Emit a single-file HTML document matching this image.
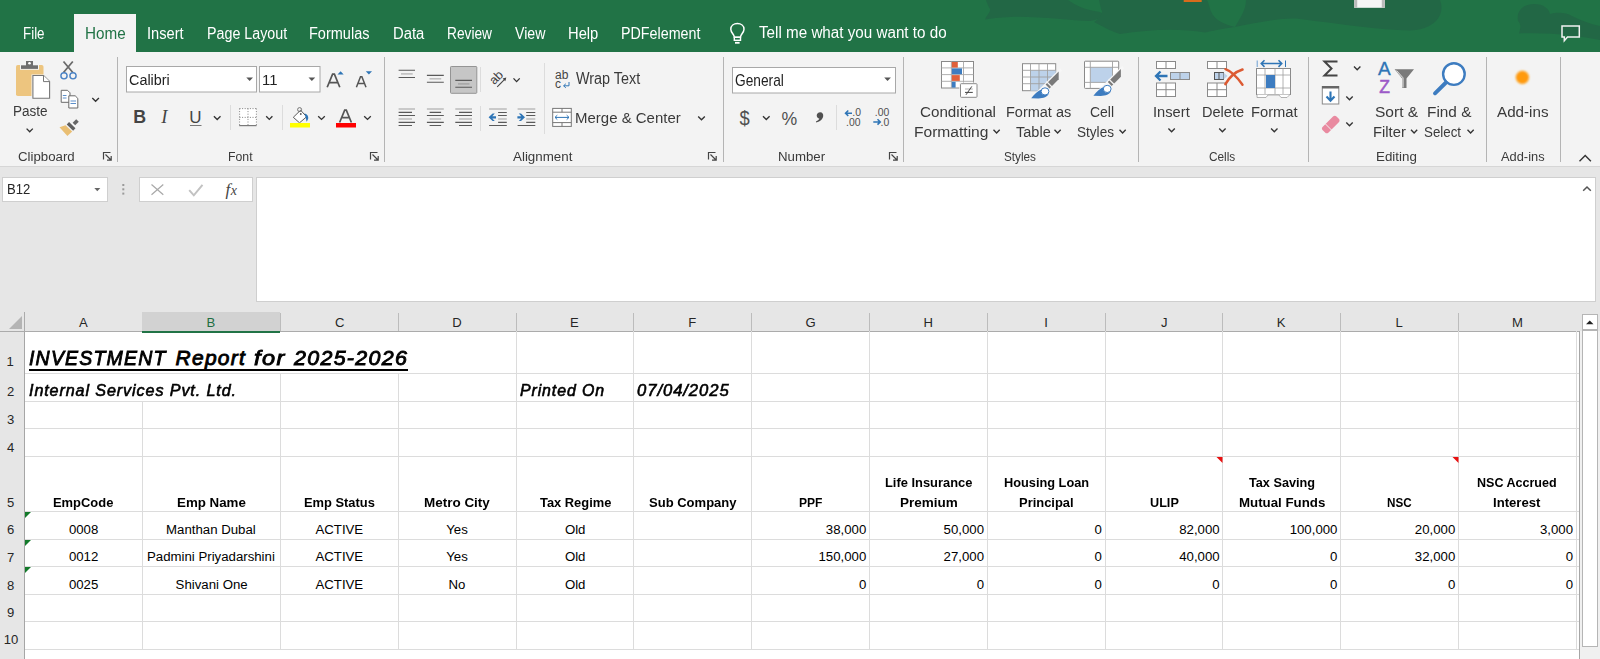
<!DOCTYPE html>
<html><head><meta charset="utf-8">
<style>
html,body{margin:0;padding:0;}
body{width:1600px;height:659px;position:relative;overflow:hidden;background:#fff;font-family:"Liberation Sans",sans-serif;}
.t{position:absolute;white-space:nowrap;line-height:1;transform-origin:0 0;}
svg{position:absolute;overflow:visible;}
</style></head><body>
<!-- tab bar -->
<div style="position:absolute;left:0;top:0;width:1600px;height:52px;background:#217346;overflow:hidden">
<svg width="1600" height="52" style="left:0;top:0">
<path d="M986 0 H1068 C1075 5 1085 10 1100 12 C1106 15 1100 20 1090 21 C1070 21 1040 16 1010 17 C1000 17.5 990 18.5 985 19.5 C987 15 991 11 990 9 C988 6 987 3 986 0 Z" fill="#226745"/>
<path d="M1099 0 H1207 C1212 10 1208 20 1235 27 C1220 29 1212 31 1205 32.5 C1180 28 1150 29 1120 34 C1110 31 1100 25 1094 22 C1100 18 1104 13 1101 9 Z" fill="#226745"/>
<path d="M1246 0 H1440 C1442 5 1442 10 1440 15 C1436 24 1425 30 1410 30.5 C1380 30 1340 24 1300 19 C1285 17 1260 22 1235 27 C1240 18 1246 10 1246 0 Z" fill="#226745"/>
<path d="M1518 21 C1516 10 1524 4 1534 4 C1544 4 1549 9 1550 14 C1556 12 1566 12 1572 16 C1580 20 1590 24 1600 26 V40 C1580 36 1550 32 1519 33.5 C1520 29 1522 25 1518 21 Z" fill="#226745"/>
<rect x="1183.7" y="0" width="18" height="2" fill="#d86b1c"/>
<rect x="1354.2" y="0" width="30.6" height="7.8" fill="#f6f6f6"/><rect x="1354.2" y="0" width="3" height="7.8" fill="#bbb"/><rect x="1381.8" y="0" width="3" height="7.8" fill="#bbb"/>
<path d="M1562 26 H1579.3 V37 H1567.5 L1564.3 40.8 V37 H1562 Z" fill="none" stroke="#f2f2f2" stroke-width="1.5"/>
</svg>
</div>
<div style="position:absolute;left:74px;top:14px;width:62px;height:40px;background:#f3f3f3"></div>
<!-- ribbon -->
<div style="position:absolute;left:0;top:52px;width:1600px;height:114px;background:#f3f3f3;border-bottom:1px solid #d6d6d6"></div>
<!-- formula area -->
<div style="position:absolute;left:0;top:167px;width:1600px;height:145px;background:#e6e6e6"></div>
<div style="position:absolute;left:2px;top:177px;width:104px;height:23px;background:#fff;border:1px solid #cfcfcf"></div>
<div style="position:absolute;left:139px;top:177px;width:112px;height:23px;background:#fff;border:1px solid #cfcfcf"></div>
<div style="position:absolute;left:256px;top:177px;width:1338px;height:123px;background:#fff;border:1px solid #cfcfcf"></div>
<!-- column headers -->
<div style="position:absolute;left:0;top:312px;width:1600px;height:19px;background:#e6e6e6"></div><div style="position:absolute;left:0;top:331px;width:1579px;height:1px;background:#ababab"></div>
<div style="position:absolute;left:142px;top:312px;width:138px;height:19px;background:#d2d2d2;border-bottom:2px solid #217346"></div>
<!-- row headers -->
<div style="position:absolute;left:0;top:332px;width:24px;height:327px;background:#e6e6e6;border-right:1px solid #a6a6a6"></div>
<!-- scrollbar -->
<div style="position:absolute;left:1579px;top:331px;width:1px;height:328px;background:#a6a6a6"></div>
<div style="position:absolute;left:1580px;top:331px;width:20px;height:328px;background:#f0f0f0"></div>
<div style="position:absolute;left:1582px;top:314px;width:14px;height:14px;background:#fff;border:1px solid #b5b5b5"></div>
<div style="position:absolute;left:1582px;top:330px;width:14px;height:315px;background:#fff;border:1px solid #b5b5b5"></div>
<div style="position:absolute;left:142px;top:401px;width:1px;height:27px;background:#dcdcdc"></div><div style="position:absolute;left:142px;top:428px;width:1px;height:28px;background:#dcdcdc"></div><div style="position:absolute;left:142px;top:456px;width:1px;height:55px;background:#dcdcdc"></div><div style="position:absolute;left:142px;top:511px;width:1px;height:28px;background:#dcdcdc"></div><div style="position:absolute;left:142px;top:539px;width:1px;height:27px;background:#dcdcdc"></div><div style="position:absolute;left:142px;top:566px;width:1px;height:28px;background:#dcdcdc"></div><div style="position:absolute;left:142px;top:594px;width:1px;height:27px;background:#dcdcdc"></div><div style="position:absolute;left:142px;top:621px;width:1px;height:28px;background:#dcdcdc"></div><div style="position:absolute;left:280px;top:373px;width:1px;height:28px;background:#dcdcdc"></div><div style="position:absolute;left:280px;top:401px;width:1px;height:27px;background:#dcdcdc"></div><div style="position:absolute;left:280px;top:428px;width:1px;height:28px;background:#dcdcdc"></div><div style="position:absolute;left:280px;top:456px;width:1px;height:55px;background:#dcdcdc"></div><div style="position:absolute;left:280px;top:511px;width:1px;height:28px;background:#dcdcdc"></div><div style="position:absolute;left:280px;top:539px;width:1px;height:27px;background:#dcdcdc"></div><div style="position:absolute;left:280px;top:566px;width:1px;height:28px;background:#dcdcdc"></div><div style="position:absolute;left:280px;top:594px;width:1px;height:27px;background:#dcdcdc"></div><div style="position:absolute;left:280px;top:621px;width:1px;height:28px;background:#dcdcdc"></div><div style="position:absolute;left:398px;top:373px;width:1px;height:28px;background:#dcdcdc"></div><div style="position:absolute;left:398px;top:401px;width:1px;height:27px;background:#dcdcdc"></div><div style="position:absolute;left:398px;top:428px;width:1px;height:28px;background:#dcdcdc"></div><div style="position:absolute;left:398px;top:456px;width:1px;height:55px;background:#dcdcdc"></div><div style="position:absolute;left:398px;top:511px;width:1px;height:28px;background:#dcdcdc"></div><div style="position:absolute;left:398px;top:539px;width:1px;height:27px;background:#dcdcdc"></div><div style="position:absolute;left:398px;top:566px;width:1px;height:28px;background:#dcdcdc"></div><div style="position:absolute;left:398px;top:594px;width:1px;height:27px;background:#dcdcdc"></div><div style="position:absolute;left:398px;top:621px;width:1px;height:28px;background:#dcdcdc"></div><div style="position:absolute;left:516px;top:331px;width:1px;height:42px;background:#dcdcdc"></div><div style="position:absolute;left:516px;top:373px;width:1px;height:28px;background:#dcdcdc"></div><div style="position:absolute;left:516px;top:401px;width:1px;height:27px;background:#dcdcdc"></div><div style="position:absolute;left:516px;top:428px;width:1px;height:28px;background:#dcdcdc"></div><div style="position:absolute;left:516px;top:456px;width:1px;height:55px;background:#dcdcdc"></div><div style="position:absolute;left:516px;top:511px;width:1px;height:28px;background:#dcdcdc"></div><div style="position:absolute;left:516px;top:539px;width:1px;height:27px;background:#dcdcdc"></div><div style="position:absolute;left:516px;top:566px;width:1px;height:28px;background:#dcdcdc"></div><div style="position:absolute;left:516px;top:594px;width:1px;height:27px;background:#dcdcdc"></div><div style="position:absolute;left:516px;top:621px;width:1px;height:28px;background:#dcdcdc"></div><div style="position:absolute;left:633px;top:331px;width:1px;height:42px;background:#dcdcdc"></div><div style="position:absolute;left:633px;top:373px;width:1px;height:28px;background:#dcdcdc"></div><div style="position:absolute;left:633px;top:401px;width:1px;height:27px;background:#dcdcdc"></div><div style="position:absolute;left:633px;top:428px;width:1px;height:28px;background:#dcdcdc"></div><div style="position:absolute;left:633px;top:456px;width:1px;height:55px;background:#dcdcdc"></div><div style="position:absolute;left:633px;top:511px;width:1px;height:28px;background:#dcdcdc"></div><div style="position:absolute;left:633px;top:539px;width:1px;height:27px;background:#dcdcdc"></div><div style="position:absolute;left:633px;top:566px;width:1px;height:28px;background:#dcdcdc"></div><div style="position:absolute;left:633px;top:594px;width:1px;height:27px;background:#dcdcdc"></div><div style="position:absolute;left:633px;top:621px;width:1px;height:28px;background:#dcdcdc"></div><div style="position:absolute;left:751px;top:331px;width:1px;height:42px;background:#dcdcdc"></div><div style="position:absolute;left:751px;top:373px;width:1px;height:28px;background:#dcdcdc"></div><div style="position:absolute;left:751px;top:401px;width:1px;height:27px;background:#dcdcdc"></div><div style="position:absolute;left:751px;top:428px;width:1px;height:28px;background:#dcdcdc"></div><div style="position:absolute;left:751px;top:456px;width:1px;height:55px;background:#dcdcdc"></div><div style="position:absolute;left:751px;top:511px;width:1px;height:28px;background:#dcdcdc"></div><div style="position:absolute;left:751px;top:539px;width:1px;height:27px;background:#dcdcdc"></div><div style="position:absolute;left:751px;top:566px;width:1px;height:28px;background:#dcdcdc"></div><div style="position:absolute;left:751px;top:594px;width:1px;height:27px;background:#dcdcdc"></div><div style="position:absolute;left:751px;top:621px;width:1px;height:28px;background:#dcdcdc"></div><div style="position:absolute;left:869px;top:331px;width:1px;height:42px;background:#dcdcdc"></div><div style="position:absolute;left:869px;top:373px;width:1px;height:28px;background:#dcdcdc"></div><div style="position:absolute;left:869px;top:401px;width:1px;height:27px;background:#dcdcdc"></div><div style="position:absolute;left:869px;top:428px;width:1px;height:28px;background:#dcdcdc"></div><div style="position:absolute;left:869px;top:456px;width:1px;height:55px;background:#dcdcdc"></div><div style="position:absolute;left:869px;top:511px;width:1px;height:28px;background:#dcdcdc"></div><div style="position:absolute;left:869px;top:539px;width:1px;height:27px;background:#dcdcdc"></div><div style="position:absolute;left:869px;top:566px;width:1px;height:28px;background:#dcdcdc"></div><div style="position:absolute;left:869px;top:594px;width:1px;height:27px;background:#dcdcdc"></div><div style="position:absolute;left:869px;top:621px;width:1px;height:28px;background:#dcdcdc"></div><div style="position:absolute;left:987px;top:331px;width:1px;height:42px;background:#dcdcdc"></div><div style="position:absolute;left:987px;top:373px;width:1px;height:28px;background:#dcdcdc"></div><div style="position:absolute;left:987px;top:401px;width:1px;height:27px;background:#dcdcdc"></div><div style="position:absolute;left:987px;top:428px;width:1px;height:28px;background:#dcdcdc"></div><div style="position:absolute;left:987px;top:456px;width:1px;height:55px;background:#dcdcdc"></div><div style="position:absolute;left:987px;top:511px;width:1px;height:28px;background:#dcdcdc"></div><div style="position:absolute;left:987px;top:539px;width:1px;height:27px;background:#dcdcdc"></div><div style="position:absolute;left:987px;top:566px;width:1px;height:28px;background:#dcdcdc"></div><div style="position:absolute;left:987px;top:594px;width:1px;height:27px;background:#dcdcdc"></div><div style="position:absolute;left:987px;top:621px;width:1px;height:28px;background:#dcdcdc"></div><div style="position:absolute;left:1105px;top:331px;width:1px;height:42px;background:#dcdcdc"></div><div style="position:absolute;left:1105px;top:373px;width:1px;height:28px;background:#dcdcdc"></div><div style="position:absolute;left:1105px;top:401px;width:1px;height:27px;background:#dcdcdc"></div><div style="position:absolute;left:1105px;top:428px;width:1px;height:28px;background:#dcdcdc"></div><div style="position:absolute;left:1105px;top:456px;width:1px;height:55px;background:#dcdcdc"></div><div style="position:absolute;left:1105px;top:511px;width:1px;height:28px;background:#dcdcdc"></div><div style="position:absolute;left:1105px;top:539px;width:1px;height:27px;background:#dcdcdc"></div><div style="position:absolute;left:1105px;top:566px;width:1px;height:28px;background:#dcdcdc"></div><div style="position:absolute;left:1105px;top:594px;width:1px;height:27px;background:#dcdcdc"></div><div style="position:absolute;left:1105px;top:621px;width:1px;height:28px;background:#dcdcdc"></div><div style="position:absolute;left:1222px;top:331px;width:1px;height:42px;background:#dcdcdc"></div><div style="position:absolute;left:1222px;top:373px;width:1px;height:28px;background:#dcdcdc"></div><div style="position:absolute;left:1222px;top:401px;width:1px;height:27px;background:#dcdcdc"></div><div style="position:absolute;left:1222px;top:428px;width:1px;height:28px;background:#dcdcdc"></div><div style="position:absolute;left:1222px;top:456px;width:1px;height:55px;background:#dcdcdc"></div><div style="position:absolute;left:1222px;top:511px;width:1px;height:28px;background:#dcdcdc"></div><div style="position:absolute;left:1222px;top:539px;width:1px;height:27px;background:#dcdcdc"></div><div style="position:absolute;left:1222px;top:566px;width:1px;height:28px;background:#dcdcdc"></div><div style="position:absolute;left:1222px;top:594px;width:1px;height:27px;background:#dcdcdc"></div><div style="position:absolute;left:1222px;top:621px;width:1px;height:28px;background:#dcdcdc"></div><div style="position:absolute;left:1340px;top:331px;width:1px;height:42px;background:#dcdcdc"></div><div style="position:absolute;left:1340px;top:373px;width:1px;height:28px;background:#dcdcdc"></div><div style="position:absolute;left:1340px;top:401px;width:1px;height:27px;background:#dcdcdc"></div><div style="position:absolute;left:1340px;top:428px;width:1px;height:28px;background:#dcdcdc"></div><div style="position:absolute;left:1340px;top:456px;width:1px;height:55px;background:#dcdcdc"></div><div style="position:absolute;left:1340px;top:511px;width:1px;height:28px;background:#dcdcdc"></div><div style="position:absolute;left:1340px;top:539px;width:1px;height:27px;background:#dcdcdc"></div><div style="position:absolute;left:1340px;top:566px;width:1px;height:28px;background:#dcdcdc"></div><div style="position:absolute;left:1340px;top:594px;width:1px;height:27px;background:#dcdcdc"></div><div style="position:absolute;left:1340px;top:621px;width:1px;height:28px;background:#dcdcdc"></div><div style="position:absolute;left:1458px;top:331px;width:1px;height:42px;background:#dcdcdc"></div><div style="position:absolute;left:1458px;top:373px;width:1px;height:28px;background:#dcdcdc"></div><div style="position:absolute;left:1458px;top:401px;width:1px;height:27px;background:#dcdcdc"></div><div style="position:absolute;left:1458px;top:428px;width:1px;height:28px;background:#dcdcdc"></div><div style="position:absolute;left:1458px;top:456px;width:1px;height:55px;background:#dcdcdc"></div><div style="position:absolute;left:1458px;top:511px;width:1px;height:28px;background:#dcdcdc"></div><div style="position:absolute;left:1458px;top:539px;width:1px;height:27px;background:#dcdcdc"></div><div style="position:absolute;left:1458px;top:566px;width:1px;height:28px;background:#dcdcdc"></div><div style="position:absolute;left:1458px;top:594px;width:1px;height:27px;background:#dcdcdc"></div><div style="position:absolute;left:1458px;top:621px;width:1px;height:28px;background:#dcdcdc"></div><div style="position:absolute;left:1576px;top:331px;width:1px;height:42px;background:#dcdcdc"></div><div style="position:absolute;left:1576px;top:373px;width:1px;height:28px;background:#dcdcdc"></div><div style="position:absolute;left:1576px;top:401px;width:1px;height:27px;background:#dcdcdc"></div><div style="position:absolute;left:1576px;top:428px;width:1px;height:28px;background:#dcdcdc"></div><div style="position:absolute;left:1576px;top:456px;width:1px;height:55px;background:#dcdcdc"></div><div style="position:absolute;left:1576px;top:511px;width:1px;height:28px;background:#dcdcdc"></div><div style="position:absolute;left:1576px;top:539px;width:1px;height:27px;background:#dcdcdc"></div><div style="position:absolute;left:1576px;top:566px;width:1px;height:28px;background:#dcdcdc"></div><div style="position:absolute;left:1576px;top:594px;width:1px;height:27px;background:#dcdcdc"></div><div style="position:absolute;left:1576px;top:621px;width:1px;height:28px;background:#dcdcdc"></div><div style="position:absolute;left:25px;top:373px;width:1554px;height:1px;background:#dcdcdc"></div><div style="position:absolute;left:25px;top:401px;width:1554px;height:1px;background:#dcdcdc"></div><div style="position:absolute;left:25px;top:428px;width:1554px;height:1px;background:#dcdcdc"></div><div style="position:absolute;left:25px;top:456px;width:1554px;height:1px;background:#dcdcdc"></div><div style="position:absolute;left:25px;top:511px;width:1554px;height:1px;background:#dcdcdc"></div><div style="position:absolute;left:25px;top:539px;width:1554px;height:1px;background:#dcdcdc"></div><div style="position:absolute;left:25px;top:566px;width:1554px;height:1px;background:#dcdcdc"></div><div style="position:absolute;left:25px;top:594px;width:1554px;height:1px;background:#dcdcdc"></div><div style="position:absolute;left:25px;top:621px;width:1554px;height:1px;background:#dcdcdc"></div><div style="position:absolute;left:25px;top:649px;width:1554px;height:1px;background:#dcdcdc"></div>
<div style="position:absolute;left:29px;top:369px;width:379px;height:2px;background:#000"></div>
<div style="position:absolute;left:24px;top:312px;width:1px;height:20px;background:#ababab"></div>
<div style="position:absolute;left:280px;top:313px;width:1px;height:18px;background:#bcbcbc"></div><div style="position:absolute;left:398px;top:313px;width:1px;height:18px;background:#bcbcbc"></div><div style="position:absolute;left:516px;top:313px;width:1px;height:18px;background:#bcbcbc"></div><div style="position:absolute;left:633px;top:313px;width:1px;height:18px;background:#bcbcbc"></div><div style="position:absolute;left:751px;top:313px;width:1px;height:18px;background:#bcbcbc"></div><div style="position:absolute;left:869px;top:313px;width:1px;height:18px;background:#bcbcbc"></div><div style="position:absolute;left:987px;top:313px;width:1px;height:18px;background:#bcbcbc"></div><div style="position:absolute;left:1105px;top:313px;width:1px;height:18px;background:#bcbcbc"></div><div style="position:absolute;left:1222px;top:313px;width:1px;height:18px;background:#bcbcbc"></div><div style="position:absolute;left:1340px;top:313px;width:1px;height:18px;background:#bcbcbc"></div><div style="position:absolute;left:1458px;top:313px;width:1px;height:18px;background:#bcbcbc"></div>
<svg width="1600" height="660" style="left:0;top:0" viewBox="0 0 1600 660">
<defs>
<filter id="blur1" x="-50%" y="-50%" width="200%" height="200%"><feGaussianBlur stdDeviation="0.9"/></filter>
</defs>
<!-- separators -->
<g fill="#b4b4b4">
<rect x="117" y="57" width="1" height="105"/>
<rect x="384" y="57" width="1" height="105"/>
<rect x="723" y="57" width="1" height="105"/>
<rect x="903" y="57" width="1" height="105"/>
<rect x="1138" y="57" width="1" height="105"/>
<rect x="1308" y="57" width="1" height="105"/>
<rect x="1486" y="57" width="1" height="105"/>
<rect x="1560" y="57" width="1" height="105"/>
</g>
<g fill="#dcdcdc">
<rect x="230" y="105" width="1" height="25"/>
<rect x="282" y="105" width="1" height="25"/>
<rect x="480" y="67" width="1" height="25"/>
<rect x="480" y="106" width="1" height="25"/>
<rect x="544" y="63" width="1" height="71"/>
<rect x="836" y="105" width="1" height="25"/>
</g>
<!-- chevrons (small) -->
<g fill="none" stroke="#333" stroke-width="1.35">
<path d="M26.6 128.6 L29.7 131.8 L32.8 128.6"/>
<path d="M92.3 98 L95.6 101.3 L98.9 98"/>
<path d="M213.9 116.2 L217.2 119.5 L220.5 116.2"/>
<path d="M266.2 116.2 L269.3 119.4 L272.4 116.2"/>
<path d="M318.2 116.2 L321.5 119.4 L324.8 116.2"/>
<path d="M364.2 116.2 L367.5 119.4 L370.8 116.2"/>
<path d="M513.5 78.4 L516.6 81.6 L519.7 78.4"/>
<path d="M698.2 116.4 L701.5 119.7 L704.8 116.4"/>
<path d="M763 116.2 L766.3 119.5 L769.6 116.2"/>
<path d="M993.5 129.8 L996.6 133 L999.7 129.8"/>
<path d="M1054.5 129.8 L1057.6 133 L1060.7 129.8"/>
<path d="M1119.5 129.8 L1122.6 133 L1125.7 129.8"/>
<path d="M1168.4 128.6 L1171.6 131.8 L1174.8 128.6"/>
<path d="M1219.2 128.6 L1222.4 131.8 L1225.6 128.6"/>
<path d="M1271.1 128.6 L1274.3 131.8 L1277.5 128.6"/>
<path d="M1354 66.5 L1357.2 69.7 L1360.4 66.5"/>
<path d="M1346.3 96.5 L1349.5 99.7 L1352.7 96.5"/>
<path d="M1346.3 122.5 L1349.5 125.7 L1352.7 122.5"/>
<path d="M1411 129.8 L1414.1 133 L1417.2 129.8"/>
<path d="M1467.5 129.8 L1470.6 133 L1473.7 129.8"/>
<path d="M1579.5 161.3 L1585.2 155.6 L1590.9 161.3" stroke-width="1.4"/>
</g>
<!-- dialog launchers -->
<g fill="none" stroke="#444" stroke-width="1.2">
<path d="M103.5 159.5 V152.5 H110.5"/><path d="M105.5 154.5 L111 160 M107 160.2 H111.2 V156"/>
<path d="M370.5 159.5 V152.5 H377.5"/><path d="M372.5 154.5 L378 160 M374 160.2 H378.2 V156"/>
<path d="M708.5 159.5 V152.5 H715.5"/><path d="M710.5 154.5 L716 160 M712 160.2 H716.2 V156"/>
<path d="M889.5 159.5 V152.5 H896.5"/><path d="M891.5 154.5 L897 160 M893 160.2 H897.2 V156"/>
</g>

<!-- ===== Clipboard ===== -->
<rect x="16" y="65" width="27.5" height="31" rx="1.8" fill="#edc57f"/>
<rect x="20" y="64.3" width="19" height="5.5" fill="#f3f3f3"/>
<rect x="21" y="65.3" width="17" height="3.6" fill="#6e6e6e"/>
<rect x="26" y="61" width="7" height="5" fill="#6e6e6e"/>
<circle cx="29.5" cy="63.3" r="1.3" fill="#fff"/>
<path d="M31.5 74.5 H43.8 L50.5 81.2 V99 H31.5 Z" fill="#f3f3f3"/>
<path d="M32.9 75.5 H43.5 L49.6 81.6 V98.3 H32.9 Z" fill="#fff" stroke="#777" stroke-width="1.1"/>
<path d="M43.5 75.5 V81.6 H49.6" fill="#fff" stroke="#777" stroke-width="1"/>
<!-- scissors -->
<path d="M63.5 61.5 L72.8 72.5 M72.8 61.5 L63.5 72.5" stroke="#6a6a6a" stroke-width="1.8" fill="none"/>
<circle cx="64" cy="75.8" r="3.1" fill="none" stroke="#4a82c4" stroke-width="1.4"/>
<circle cx="73" cy="75.8" r="3.1" fill="none" stroke="#4a82c4" stroke-width="1.4"/>
<!-- copy -->
<path d="M61.2 90.3 H67.5 L70 92.8 V102.3 H61.2 Z" fill="#fff" stroke="#6a6a6a" stroke-width="1"/>
<path d="M68.8 95.8 H75.2 L77.8 98.4 V108 H68.8 Z" fill="#fff" stroke="#6a6a6a" stroke-width="1"/>
<path d="M62.8 95.5 H66.5 M62.8 98 H66.5 M70.5 101 H76 M70.5 103.5 H76" stroke="#4a82c4" stroke-width="0.9"/>
<!-- format painter -->
<path d="M73.9 124 L77.5 120.4" stroke="#666" stroke-width="3.6"/>
<path d="M67.9 123.2 L74.3 129.5" stroke="#5f5f5f" stroke-width="3.3"/>
<path d="M59.5 127.2 L65.5 125.2 L72.2 131.4 L67.4 135.9 Z" fill="#e9be72"/>
<!-- ===== Font ===== -->
<rect x="126.5" y="66.5" width="130" height="25.5" fill="#fff" stroke="#a8a8a8" stroke-width="1"/>
<rect x="259.5" y="66.5" width="60.5" height="25.5" fill="#fff" stroke="#a8a8a8" stroke-width="1"/>
<path d="M246.3 77.6 H253 L249.65 81 Z" fill="#555"/>
<path d="M308.5 77.6 H315.2 L311.85 81 Z" fill="#555"/>
<!-- grow/shrink A -->
<path d="M327.2 87.3 L332.6 74.2 H334.4 L339.8 87.3 M329.3 82.6 H337.7" fill="none" stroke="#555" stroke-width="1.7"/>
<path d="M337.5 74.5 L340.6 71.3 L343.7 74.5 Z" fill="#2e75b6"/>
<path d="M356.4 87.3 L360.5 76.8 H361.9 L366 87.3 M358 83.4 H364.4" fill="none" stroke="#555" stroke-width="1.5"/>
<path d="M365.8 71.3 H372 L368.9 74.5 Z" fill="#2e75b6"/>
<!-- B I U -->
<text x="133.3" y="123.4" font-family="Liberation Sans" font-weight="bold" font-size="17.8" fill="#444">B</text>
<text x="161.2" y="123.4" font-family="Liberation Serif" font-style="italic" font-size="18.5" fill="#444">I</text>
<text x="189.2" y="123.2" font-family="Liberation Sans" font-size="17" fill="#444">U</text>
<rect x="190" y="125" width="11.5" height="1" fill="#777"/>
<!-- borders icon -->
<rect x="239.5" y="108.5" width="17" height="17" fill="#fff"/>
<path d="M239.6 108.5 V125 M256.4 108.5 V125 M248 108.5 V125 M239.5 108.6 H256.5 M239.5 117.4 H256.5" stroke="#777" stroke-width="0.9" stroke-dasharray="1 1.6" fill="none"/>
<rect x="239.2" y="125" width="17.4" height="1.2" fill="#7a7a7a"/>
<!-- fill color -->
<path d="M293.3 117.3 L300.6 110.2 L306.6 116.8 L299.5 122.8 Z" fill="#fff" stroke="#5a5a5a" stroke-width="1"/>
<circle cx="299.6" cy="109.6" r="2" fill="none" stroke="#666" stroke-width="0.9"/>
<circle cx="300.8" cy="114" r="0.9" fill="#555"/>
<path d="M304.5 113.2 C307.5 114.2 308.6 116.5 308.2 118.5 C307.8 120 307 121 306.5 121.8 C306.2 119.5 306 117.5 305.2 116 Z" fill="#2e75b6"/>
<rect x="290" y="123" width="20" height="4.5" fill="#ffff00"/>
<!-- font color -->
<path d="M339.6 122.5 L344.7 110.2 H346.3 L351.4 122.5 M341.5 117.7 H349.5" fill="none" stroke="#555" stroke-width="1.7"/>
<rect x="336" y="123" width="20" height="4.5" fill="#ff0000"/>

<!-- ===== Alignment ===== -->
<rect x="450.5" y="66.5" width="26.3" height="26.8" rx="0.8" fill="#c6c6c6" stroke="#949494" stroke-width="1"/>
<g stroke="#5a5a5a" stroke-width="1.1" fill="none">
<path d="M398.6 70.3 H415 M398.6 77.5 H415"/>
<path d="M426.9 75.4 H443.8 M426.9 82.3 H443.8"/>
<path d="M455.3 80.4 H472 M455.3 87.3 H472"/>
</g>
<g stroke="#bcbcbc" stroke-width="1.5" fill="none">
<path d="M401 73.9 H412.7"/>
<path d="M429.5 78.8 H441.2"/>
</g>
<path d="M458 83.9 H469.5" stroke="#a5a5a5" stroke-width="1.5"/>
<!-- orientation -->
<text x="0" y="0" font-family="Liberation Sans" font-size="12.5" fill="#444" transform="translate(494.2 85.3) rotate(-45)">ab</text>
<path d="M497.2 86.8 L505.6 78.3" stroke="#444" stroke-width="1.1" fill="none"/><path d="M506.3 77.6 L502.6 78.6 L505.3 81.3 Z" fill="#444"/>
<!-- row2 align -->
<g stroke="#bcbcbc" stroke-width="1.5" fill="none">
<path d="M398.6 109 H415 M398.6 119 H412"/>
<path d="M426.9 109 H443.8 M429.6 119 H441.1"/>
<path d="M455.3 109 H472 M459 119 H472"/>
<path d="M489.1 109 H506.8 M498.1 119 H506.8"/>
<path d="M517.6 109 H535.3 M526.2 119 H535.3"/>
</g>
<g stroke="#5a5a5a" stroke-width="1.1" fill="none">
<path d="M398.6 112.4 H412 M398.6 115.5 H415 M398.6 122.4 H415 M398.6 125.5 H412"/>
<path d="M429.6 112.4 H441.1 M426.9 115.5 H443.8 M426.9 122.4 H443.8 M429.6 125.5 H441.1"/>
<path d="M459 112.4 H472 M455.3 115.5 H472 M455.3 122.4 H472 M459 125.5 H472"/>
<path d="M498.1 112.5 H506.8 M498.1 115.5 H506.8 M498.1 122.4 H506.8 M489.1 125.5 H506.8"/>
<path d="M526.2 112.5 H535.3 M526.2 115.5 H535.3 M526.2 122.4 H535.3 M517.6 125.5 H535.3"/>
</g>
<path d="M488.6 117.3 L492.6 113.6 H494.8 L492.3 116.2 H496 V118.4 H492.3 L494.8 121 H492.6 Z" fill="#2e75b6"/>
<path d="M525 117.3 L521 113.6 H518.8 L521.3 116.2 H517.4 V118.4 H521.3 L518.8 121 H521 Z" fill="#2e75b6"/>
<!-- wrap text icon -->
<text x="555" y="78.9" font-family="Liberation Sans" font-size="12" fill="#444">ab</text>
<text x="555" y="88" font-family="Liberation Sans" font-size="12" fill="#444">c</text>
<path d="M569 82 V85.8 H563.8 M565.8 83.8 L563.6 85.8 L565.8 87.8" stroke="#2e75b6" stroke-width="1" fill="none"/>
<!-- merge icon -->
<rect x="552.7" y="108.4" width="18.6" height="18" fill="#fff" stroke="#777" stroke-width="1"/>
<path d="M552.7 112.2 H571.3 M552.7 122.6 H571.3 M562 108.4 V112.2 M562 122.6 V126.4" stroke="#777" stroke-width="1"/>
<path d="M555 117.4 H569 M557.3 115.2 L555 117.4 L557.3 119.6 M566.7 115.2 L569 117.4 L566.7 119.6" stroke="#2e75b6" stroke-width="1" fill="none"/>

<!-- ===== Number ===== -->
<rect x="732.5" y="67.5" width="163" height="25.5" fill="#fff" stroke="#a8a8a8" stroke-width="1"/>
<path d="M884.2 77.6 H890.9 L887.55 81 Z" fill="#555"/>
<text x="739.6" y="125.3" font-family="Liberation Sans" font-size="20" fill="#505050" transform="translate(739.6 0) scale(0.92 1) translate(-739.6 0)">$</text>
<text x="781.6" y="124.8" font-family="Liberation Sans" font-size="19" fill="#505050" transform="translate(781.6 0) scale(0.93 1) translate(-781.6 0)">%</text>
<path d="M820.2 112.2 C822.4 112.2 823.4 114 823.2 116 C823 119 820.5 121.4 816.2 122.4 L815.9 121.6 C818 120.6 819.2 119.5 819.3 118.6 C817.8 118.4 816.7 117.2 816.7 115.6 C816.7 113.6 818.2 112.2 820.2 112.2 Z" fill="#505050"/>
<!-- inc/dec decimal -->
<text x="852.3" y="116.2" font-family="Liberation Sans" font-size="10.4" fill="#505050">.0</text>
<text x="846" y="125.9" font-family="Liberation Sans" font-size="10.4" fill="#505050">.00</text>
<path d="M845.5 113.2 H852 M848.3 110.5 L845.5 113.2 L848.3 115.9" stroke="#2e75b6" stroke-width="1.5" fill="none"/>
<text x="874.8" y="116.2" font-family="Liberation Sans" font-size="10.4" fill="#505050">.00</text>
<text x="880.6" y="125.9" font-family="Liberation Sans" font-size="10.4" fill="#505050">.0</text>
<path d="M873.3 121.9 H880.2 M877.5 119.2 L880.3 121.9 L877.5 124.6" stroke="#2e75b6" stroke-width="1.5" fill="none"/>

<!-- ===== Styles ===== -->
<!-- conditional formatting -->
<rect x="941.5" y="61.5" width="32" height="26.5" fill="#fff" stroke="#8a8a8a" stroke-width="1"/>
<path d="M941.5 67.9 H973.5 M941.5 74.6 H973.5 M941.5 81.3 H973.5 M951.4 61.5 V88 M963.5 61.5 V88" stroke="#a8a8a8" stroke-width="0.9"/>
<rect x="951.8" y="62" width="6" height="5.6" fill="#e0603a"/>
<rect x="951.8" y="68.4" width="10.2" height="5.8" fill="#3d7cc0"/>
<rect x="951.8" y="75.1" width="8" height="5.8" fill="#e0603a"/>
<rect x="951.8" y="81.8" width="3.8" height="5.8" fill="#3d7cc0"/>
<rect x="959.3" y="82.5" width="19" height="16" fill="#f3f3f3"/>
<rect x="960.5" y="83.7" width="16.5" height="13.6" rx="0.8" fill="#fff" stroke="#8a8a8a" stroke-width="1"/>
<path d="M965 89 H972.8" stroke="#b0b0b0" stroke-width="1"/>
<path d="M965 92.4 H972.8 M971.8 86.4 L966 94.8" stroke="#444" stroke-width="1" fill="none"/>
<!-- format as table -->
<rect x="1022.5" y="63.7" width="33.2" height="27" fill="#fff" stroke="#8a8a8a" stroke-width="1"/>
<rect x="1030.5" y="70.3" width="25.2" height="20.4" fill="#bdd2ea"/>
<path d="M1022.5 70.3 H1055.7 M1022.5 77 H1055.7 M1022.5 83.7 H1055.7 M1030.5 63.7 V90.7 M1039 63.7 V90.7 M1047.5 63.7 V90.7" stroke="#a0a0a0" stroke-width="0.9"/>
<path d="M1058 72.5 V92 H1038.5 Z" fill="#f3f3f3"/><path d="M1061 69.5 L1036.5 94" stroke="#f7f7f7" stroke-width="3"/>
<path d="M1058.7 71.5 L1058.7 79.2 L1049.5 88.4 L1045.6 84.5 Z" fill="#7a7a7a"/>
<path d="M1046.5 81.5 L1052 87" stroke="#f3f3f3" stroke-width="1.3"/>
<path d="M1031.2 98.2 C1034.5 94 1038 90.5 1041.5 89.5 C1044 93 1046.5 94.5 1048.8 93.5 C1047.5 96.8 1043.5 98.4 1038.5 98.4 Z" fill="#3d7cc0"/>
<ellipse cx="1045" cy="91.4" rx="3.9" ry="3.6" fill="#fff" stroke="#3d7cc0" stroke-width="1"/>
<!-- cell styles -->
<rect x="1084.5" y="61.2" width="34.2" height="27.2" rx="0.8" fill="#fff" stroke="#8a8a8a" stroke-width="1"/>
<rect x="1090.3" y="67.3" width="22.2" height="15.1" fill="#bdd2ea"/>
<path d="M1084.5 67.3 H1118.7 M1084.5 82.4 H1118.7 M1090.3 61.2 V88.4 M1112.5 61.2 V88.4" stroke="#a0a0a0" stroke-width="0.9"/>
<g transform="translate(62.2 -2.5)"><path d="M1058 72.5 V92 H1038.5 Z" fill="#f3f3f3"/><path d="M1061 69.5 L1036.5 94" stroke="#f7f7f7" stroke-width="3"/>
<path d="M1058.7 71.5 L1058.7 79.2 L1049.5 88.4 L1045.6 84.5 Z" fill="#7a7a7a"/>
<path d="M1046.5 81.5 L1052 87" stroke="#f3f3f3" stroke-width="1.3"/>
<path d="M1031.2 98.2 C1034.5 94 1038 90.5 1041.5 89.5 C1044 93 1046.5 94.5 1048.8 93.5 C1047.5 96.8 1043.5 98.4 1038.5 98.4 Z" fill="#3d7cc0"/>
<ellipse cx="1045" cy="91.4" rx="3.9" ry="3.6" fill="#fff" stroke="#3d7cc0" stroke-width="1"/></g>

<!-- ===== Cells ===== -->
<!-- insert -->
<g fill="#fff" stroke="#8a8a8a" stroke-width="1">
<rect x="1156.5" y="61.5" width="19" height="7"/>
<rect x="1156.5" y="83" width="19" height="13.5"/>
</g>
<path d="M1166 61.5 V68.5 M1156.5 89.7 H1175.5 M1166 83 V96.5" stroke="#8a8a8a" stroke-width="1"/>
<rect x="1170.5" y="72.5" width="19" height="7" fill="#bdd2ea" stroke="#8a8a8a" stroke-width="1"/>
<path d="M1180 72.5 V79.5" stroke="#8a8a8a" stroke-width="1"/>
<path d="M1156 76 H1167.5 M1160.5 71.5 L1156 76 L1160.5 80.5" stroke="#2e75b6" stroke-width="2.3" fill="none"/>
<!-- delete -->
<g fill="#fff" stroke="#8a8a8a" stroke-width="1">
<rect x="1207.5" y="61.5" width="19" height="7"/>
<rect x="1207.5" y="83" width="19" height="13.5"/>
</g>
<path d="M1217 61.5 V68.5 M1207.5 89.7 H1226.5 M1217 83 V96.5" stroke="#8a8a8a" stroke-width="1"/>
<rect x="1214.5" y="72.5" width="9" height="7" fill="#bdd2ea" stroke="#555" stroke-width="1"/><path d="M1223.5 72.5 L1227.5 76 L1223.5 79.5 Z" fill="#bdd2ea"/><path d="M1219 72.5 V79.5" stroke="#555" stroke-width="1"/>
<path d="M1225.5 69.2 C1232 71.5 1237 77 1242.5 84.8" stroke="#dc5a32" stroke-width="2.4" fill="none" stroke-linecap="round"/><path d="M1242.5 69.6 C1235 72 1229 78 1225.4 84.2" stroke="#dc5a32" stroke-width="2.6" fill="none" stroke-linecap="round"/>
<!-- format -->
<path d="M1257.2 60.5 V67" stroke="#6a9ed3" stroke-width="1"/><path d="M1285.5 60.5 V67" stroke="#2e75b6" stroke-width="1"/><path d="M1261 63.6 H1282 M1264.5 60.3 L1261.2 63.6 L1264.5 66.9 M1278.5 60.3 L1281.8 63.6 L1278.5 66.9" stroke="#2e75b6" stroke-width="1.5" fill="none"/>
<rect x="1256.5" y="68.5" width="34" height="26" fill="#fff" stroke="#8a8a8a" stroke-width="1"/>
<path d="M1256.5 75 H1290.5 M1256.5 88 H1290.5 M1265 68.5 V94.5 M1275 68.5 V94.5 M1283 68.5 V94.5" stroke="#a0a0a0" stroke-width="0.8"/>
<rect x="1266" y="75" width="9" height="13" fill="#3d7cc0"/>
<path d="M1257 94.5 V97.5 H1266 L1268 95 H1279 L1281 97.5 H1287 L1290 94.5" stroke="#a0a0a0" stroke-width="0.8" fill="#fff"/>

<!-- ===== Editing ===== -->
<path d="M1337.5 61.5 H1324.5 L1331.5 68.5 L1324.5 75.5 H1337.5" stroke="#444" stroke-width="2" fill="none"/>
<rect x="1322.3" y="86.5" width="16.5" height="17.5" fill="#fff" stroke="#8a8a8a" stroke-width="1"/>
<rect x="1322" y="86" width="17" height="2.5" fill="#666"/>
<path d="M1330.5 91.5 V100 M1326.5 96.5 L1330.5 100.8 L1334.5 96.5" stroke="#2e75b6" stroke-width="2.1" fill="none"/>
<path d="M1322.5 127 L1333 116.5 C1334 115.5 1335.5 115.5 1336.5 116.5 L1338.8 118.8 C1339.8 119.8 1339.8 121.3 1338.8 122.3 L1328.3 132.8 C1327.5 133.5 1326 133.5 1325.3 132.8 L1322.5 130 C1321.7 129.2 1321.7 127.8 1322.5 127 Z" fill="#e98aa0"/>
<path d="M1325.5 124 L1331.8 130.3" stroke="#f3f3f3" stroke-width="1"/>
<!-- sort & filter -->
<text x="1378" y="74.9" font-family="Liberation Sans" font-size="19" fill="#2e75b6" stroke="#2e75b6" stroke-width="0.35">A</text>
<text x="1379.2" y="92.9" font-family="Liberation Sans" font-size="17.5" fill="#9b59c7" stroke="#9b59c7" stroke-width="0.5">Z</text>
<path d="M1394.6 69.2 H1414 L1406.5 78.5 V88 H1402.2 V78.5 Z" fill="#7a7a7a"/>
<path d="M1396.5 70.6 L1403 77.8 V87.5" stroke="#f6f6f6" stroke-width="0.9" fill="none"/>
<!-- find -->
<circle cx="1453.9" cy="74.1" r="10.8" fill="#fff" stroke="#3d7cc0" stroke-width="2.4"/>
<path d="M1446 82.5 L1435 93.3" stroke="#3d7cc0" stroke-width="3.9" stroke-linecap="round"/>

<!-- ===== Add-ins ===== -->
<circle cx="1522.4" cy="77.3" r="6.6" fill="#ff9a0a" filter="url(#blur1)"/>

<!-- ===== formula bar ===== -->
<path d="M94.3 188 H100.3 L97.3 191.3 Z" fill="#666"/>
<g fill="#9a9a9a"><rect x="122.3" y="184" width="2" height="2"/><rect x="122.3" y="188.3" width="2" height="2"/><rect x="122.3" y="192.6" width="2" height="2"/></g>
<path d="M151.5 184.5 L163.3 194.8 M163.3 184.5 L151.5 194.8" stroke="#a9a9a9" stroke-width="1.2"/>
<path d="M189.2 190.2 L193.8 195.3 L202.5 184.8" stroke="#c2c2c2" stroke-width="2" fill="none"/>
<text x="225.5" y="194.8" font-family="Liberation Serif" font-style="italic" font-size="17" fill="#444">f</text>
<text x="230.8" y="194.8" font-family="Liberation Serif" font-style="italic" font-size="14" fill="#444">x</text>
<path d="M1583.2 190.8 L1587 187 L1590.8 190.8" stroke="#555" stroke-width="1.5" fill="none"/>

<!-- select all triangle -->
<path d="M22 316 V329 H9 Z" fill="#b4b4b4"/>
<!-- scroll up arrow -->
<path d="M1586 324.3 H1593.5 L1589.75 320.5 Z" fill="#222"/>
<!-- comment indicators -->
<path d="M1216.5 457 H1222.5 V463 Z" fill="#e81010"/>
<path d="M1452.5 457 H1458.5 V463 Z" fill="#e81010"/>
<!-- green error triangles -->
<path d="M25 512 H31 L25 518 Z" fill="#137a2a"/>
<path d="M25 540 H31 L25 546 Z" fill="#137a2a"/>
<path d="M25 567 H31 L25 573 Z" fill="#137a2a"/>
<!-- lightbulb -->
<path d="M734.4 37.3 C734.4 34.5 730.8 32.8 730.8 29.3 C730.8 25.7 733.8 23.6 737.4 23.6 C741 23.6 744 25.7 744 29.3 C744 32.8 740.4 34.5 740.4 37.3 Z" fill="none" stroke="#fff" stroke-width="1.5"/>
<rect x="734.3" y="37.3" width="6.2" height="3" fill="none" stroke="#fff" stroke-width="1.4"/>
<rect x="735" y="41.9" width="4.6" height="1.8" fill="#fff"/>
</svg>

<div class="t" style="left:23.36px;top:25.66px;font-size:15.989px;color:#ffffff;transform:scaleX(0.8370);">File</div>
<div class="t" style="left:84.54px;top:25.66px;font-size:15.989px;color:#217346;transform:scaleX(0.9565);">Home</div>
<div class="t" style="left:147.28px;top:25.66px;font-size:15.989px;color:#ffffff;transform:scaleX(0.9164);">Insert</div>
<div class="t" style="left:206.91px;top:25.66px;font-size:15.989px;color:#ffffff;transform:scaleX(0.8931);">Page Layout</div>
<div class="t" style="left:309.49px;top:25.66px;font-size:15.989px;color:#ffffff;transform:scaleX(0.9090);">Formulas</div>
<div class="t" style="left:393.07px;top:25.66px;font-size:15.989px;color:#ffffff;transform:scaleX(0.9285);">Data</div>
<div class="t" style="left:446.64px;top:25.66px;font-size:15.989px;color:#ffffff;transform:scaleX(0.8586);">Review</div>
<div class="t" style="left:514.60px;top:25.66px;font-size:15.989px;color:#ffffff;transform:scaleX(0.8853);">View</div>
<div class="t" style="left:567.58px;top:25.66px;font-size:15.989px;color:#ffffff;transform:scaleX(0.9230);">Help</div>
<div class="t" style="left:621.11px;top:25.66px;font-size:15.989px;color:#ffffff;transform:scaleX(0.8946);">PDFelement</div>
<div class="t" style="left:759.30px;top:24.86px;font-size:15.989px;color:#ffffff;transform:scaleX(0.9520);">Tell me what you want to do</div>
<div class="t" style="left:13.29px;top:104.45px;font-size:14.826px;color:#3a3a3a;transform:scaleX(0.9143);">Paste</div>
<div class="t" style="left:17.90px;top:149.93px;font-size:13.082px;color:#3a3a3a;transform:scaleX(1.0125);">Clipboard</div>
<div class="t" style="left:129.00px;top:71.88px;font-size:15.262px;color:#222;transform:scaleX(0.9433);">Calibri</div>
<div class="t" style="left:262.02px;top:71.88px;font-size:15.262px;color:#222;transform:scaleX(0.9757);">11</div>
<div class="t" style="left:227.56px;top:149.93px;font-size:13.082px;color:#3a3a3a;transform:scaleX(0.9399);">Font</div>
<div class="t" style="left:576.00px;top:71.46px;font-size:15.989px;color:#3a3a3a;transform:scaleX(0.9009);">Wrap Text</div>
<div class="t" style="left:575.32px;top:110.48px;font-size:15.262px;color:#3a3a3a;transform:scaleX(0.9825);">Merge &amp; Center</div>
<div class="t" style="left:513.00px;top:149.93px;font-size:13.082px;color:#3a3a3a;transform:scaleX(1.0218);">Alignment</div>
<div class="t" style="left:734.80px;top:72.61px;font-size:15.698px;color:#222;transform:scaleX(0.8748);">General</div>
<div class="t" style="left:778.29px;top:149.53px;font-size:13.082px;color:#3a3a3a;transform:scaleX(1.0139);">Number</div>
<div class="t" style="left:920.00px;top:104.08px;font-size:15.262px;color:#3a3a3a;transform:scaleX(0.9959);">Conditional</div>
<div class="t" style="left:913.58px;top:123.58px;font-size:15.262px;color:#3a3a3a;transform:scaleX(1.0210);">Formatting</div>
<div class="t" style="left:1005.65px;top:104.08px;font-size:15.262px;color:#3a3a3a;transform:scaleX(0.9498);">Format as</div>
<div class="t" style="left:1015.70px;top:123.58px;font-size:15.262px;color:#3a3a3a;transform:scaleX(0.9535);">Table</div>
<div class="t" style="left:1090.30px;top:104.08px;font-size:15.262px;color:#3a3a3a;transform:scaleX(0.9157);">Cell</div>
<div class="t" style="left:1076.70px;top:123.58px;font-size:15.262px;color:#3a3a3a;transform:scaleX(0.8902);">Styles</div>
<div class="t" style="left:1003.80px;top:149.93px;font-size:13.082px;color:#3a3a3a;transform:scaleX(0.8981);">Styles</div>
<div class="t" style="left:1153.04px;top:104.08px;font-size:15.262px;color:#3a3a3a;transform:scaleX(0.9630);">Insert</div>
<div class="t" style="left:1202.34px;top:104.08px;font-size:15.262px;color:#3a3a3a;transform:scaleX(0.9554);">Delete</div>
<div class="t" style="left:1250.63px;top:104.08px;font-size:15.262px;color:#3a3a3a;transform:scaleX(0.9655);">Format</div>
<div class="t" style="left:1209.30px;top:149.93px;font-size:13.082px;color:#3a3a3a;transform:scaleX(0.9042);">Cells</div>
<div class="t" style="left:1374.60px;top:104.08px;font-size:15.262px;color:#3a3a3a;transform:scaleX(1.0188);">Sort &amp;</div>
<div class="t" style="left:1373.23px;top:123.58px;font-size:15.262px;color:#3a3a3a;transform:scaleX(0.9692);">Filter</div>
<div class="t" style="left:1427.49px;top:104.08px;font-size:15.262px;color:#3a3a3a;transform:scaleX(1.0069);">Find &amp;</div>
<div class="t" style="left:1424.30px;top:123.58px;font-size:15.262px;color:#3a3a3a;transform:scaleX(0.8738);">Select</div>
<div class="t" style="left:1376.48px;top:149.93px;font-size:13.082px;color:#3a3a3a;transform:scaleX(1.0203);">Editing</div>
<div class="t" style="left:1497.30px;top:104.08px;font-size:15.262px;color:#3a3a3a;transform:scaleX(0.9965);">Add-ins</div>
<div class="t" style="left:1501.00px;top:149.93px;font-size:13.082px;color:#3a3a3a;transform:scaleX(0.9821);">Add-ins</div>
<div class="t" style="left:6.96px;top:182.79px;font-size:13.954px;color:#262626;transform:scaleX(0.9398);">B12</div>
<div class="t" style="left:78.95px;top:315.83px;font-size:13.082px;color:#262626;">A</div>
<div class="t" style="left:206.45px;top:315.83px;font-size:13.082px;color:#1e6e42;">B</div>
<div class="t" style="left:334.90px;top:315.83px;font-size:13.082px;color:#262626;">C</div>
<div class="t" style="left:452.20px;top:315.83px;font-size:13.082px;color:#262626;">D</div>
<div class="t" style="left:570.00px;top:315.83px;font-size:13.082px;color:#262626;">E</div>
<div class="t" style="left:688.30px;top:315.83px;font-size:13.082px;color:#262626;">F</div>
<div class="t" style="left:805.60px;top:315.83px;font-size:13.082px;color:#262626;">G</div>
<div class="t" style="left:923.40px;top:315.83px;font-size:13.082px;color:#262626;">H</div>
<div class="t" style="left:1044.20px;top:315.83px;font-size:13.082px;color:#262626;">I</div>
<div class="t" style="left:1161.00px;top:315.83px;font-size:13.082px;color:#262626;">J</div>
<div class="t" style="left:1276.80px;top:315.83px;font-size:13.082px;color:#262626;">K</div>
<div class="t" style="left:1395.60px;top:315.83px;font-size:13.082px;color:#262626;">L</div>
<div class="t" style="left:1511.90px;top:315.83px;font-size:13.082px;color:#262626;">M</div>
<div class="t" style="left:6.60px;top:354.73px;font-size:13.082px;color:#262626;">1</div>
<div class="t" style="left:7.10px;top:384.63px;font-size:13.082px;color:#262626;">2</div>
<div class="t" style="left:7.10px;top:413.13px;font-size:13.082px;color:#262626;">3</div>
<div class="t" style="left:7.10px;top:440.63px;font-size:13.082px;color:#262626;">4</div>
<div class="t" style="left:7.10px;top:495.53px;font-size:13.082px;color:#262626;">5</div>
<div class="t" style="left:7.10px;top:523.43px;font-size:13.082px;color:#262626;">6</div>
<div class="t" style="left:7.10px;top:550.83px;font-size:13.082px;color:#262626;">7</div>
<div class="t" style="left:7.10px;top:578.63px;font-size:13.082px;color:#262626;">8</div>
<div class="t" style="left:7.10px;top:605.53px;font-size:13.082px;color:#262626;">9</div>
<div class="t" style="left:3.76px;top:633.33px;font-size:13.082px;color:#262626;">10</div>
<div class="t" style="left:29.00px;top:347.88px;font-size:20.931px;color:#000000;font-style:italic;transform:scaleX(0.9310);letter-spacing:1.3px;-webkit-text-stroke:0.9px #000;">INVESTMENT</div>
<div class="t" style="left:175.60px;top:347.88px;font-size:20.931px;color:#000000;font-style:italic;letter-spacing:1.3px;-webkit-text-stroke:0.9px #000;">Report</div>
<div class="t" style="left:254.00px;top:347.88px;font-size:20.931px;color:#000000;font-style:italic;transform:scaleX(1.1231);letter-spacing:1.3px;-webkit-text-stroke:0.9px #000;">for</div>
<div class="t" style="left:294.32px;top:347.88px;font-size:20.931px;color:#000000;font-style:italic;transform:scaleX(1.0213);letter-spacing:1.3px;-webkit-text-stroke:0.9px #000;">2025-2026</div>
<div class="t" style="left:28.75px;top:381.82px;font-size:16.279px;color:#000000;font-style:italic;transform:scaleX(0.9920);letter-spacing:0.9px;-webkit-text-stroke:0.6px #000;">Internal Services Pvt. Ltd.</div>
<div class="t" style="left:519.50px;top:381.72px;font-size:16.279px;color:#000000;font-style:italic;transform:scaleX(0.9789);letter-spacing:0.9px;-webkit-text-stroke:0.6px #000;">Printed On</div>
<div class="t" style="left:637.30px;top:381.72px;font-size:16.279px;color:#000000;font-style:italic;transform:scaleX(1.0247);letter-spacing:0.9px;-webkit-text-stroke:0.6px #000;">07/04/2025</div>
<div class="t" style="left:53.45px;top:496.10px;font-size:13.227px;color:#000000;font-weight:bold;transform:scaleX(0.9782);">EmpCode</div>
<div class="t" style="left:177.20px;top:496.10px;font-size:13.227px;color:#000000;font-weight:bold;transform:scaleX(1.0078);">Emp Name</div>
<div class="t" style="left:304.15px;top:496.10px;font-size:13.227px;color:#000000;font-weight:bold;transform:scaleX(0.9742);">Emp Status</div>
<div class="t" style="left:423.95px;top:496.10px;font-size:13.227px;color:#000000;font-weight:bold;transform:scaleX(1.0187);">Metro City</div>
<div class="t" style="left:539.50px;top:496.10px;font-size:13.227px;color:#000000;font-weight:bold;transform:scaleX(0.9744);">Tax Regime</div>
<div class="t" style="left:648.70px;top:496.10px;font-size:13.227px;color:#000000;font-weight:bold;transform:scaleX(0.9853);">Sub Company</div>
<div class="t" style="left:798.90px;top:496.10px;font-size:13.227px;color:#000000;font-weight:bold;transform:scaleX(0.9129);">PPF</div>
<div class="t" style="left:884.90px;top:476.30px;font-size:13.227px;color:#000000;font-weight:bold;transform:scaleX(0.9746);">Life Insurance</div>
<div class="t" style="left:899.90px;top:496.10px;font-size:13.227px;color:#000000;font-weight:bold;transform:scaleX(1.0213);">Premium</div>
<div class="t" style="left:1003.70px;top:476.30px;font-size:13.227px;color:#000000;font-weight:bold;transform:scaleX(0.9654);">Housing Loan</div>
<div class="t" style="left:1019.20px;top:496.10px;font-size:13.227px;color:#000000;font-weight:bold;transform:scaleX(0.9790);">Principal</div>
<div class="t" style="left:1149.50px;top:496.10px;font-size:13.227px;color:#000000;font-weight:bold;transform:scaleX(0.9573);">ULIP</div>
<div class="t" style="left:1248.80px;top:476.30px;font-size:13.227px;color:#000000;font-weight:bold;transform:scaleX(0.9602);">Tax Saving</div>
<div class="t" style="left:1238.80px;top:496.10px;font-size:13.227px;color:#000000;font-weight:bold;transform:scaleX(1.0052);">Mutual Funds</div>
<div class="t" style="left:1387.10px;top:496.10px;font-size:13.227px;color:#000000;font-weight:bold;transform:scaleX(0.8814);">NSC</div>
<div class="t" style="left:1477.40px;top:476.30px;font-size:13.227px;color:#000000;font-weight:bold;transform:scaleX(0.9479);">NSC Accrued</div>
<div class="t" style="left:1493.40px;top:496.10px;font-size:13.227px;color:#000000;font-weight:bold;transform:scaleX(0.9928);">Interest</div>
<div class="t" style="left:68.92px;top:523.40px;font-size:13.227px;color:#000000;">0008</div>
<div class="t" style="left:166.09px;top:523.40px;font-size:13.227px;color:#000000;">Manthan Dubal</div>
<div class="t" style="left:315.44px;top:523.40px;font-size:13.227px;color:#000000;">ACTIVE</div>
<div class="t" style="left:446.22px;top:523.40px;font-size:13.227px;color:#000000;">Yes</div>
<div class="t" style="left:564.89px;top:523.40px;font-size:13.227px;color:#000000;">Old</div>
<div class="t" style="left:825.82px;top:523.40px;font-size:13.227px;color:#000000;">38,000</div>
<div class="t" style="left:943.62px;top:523.40px;font-size:13.227px;color:#000000;">50,000</div>
<div class="t" style="left:1094.50px;top:523.40px;font-size:13.227px;color:#000000;">0</div>
<div class="t" style="left:1179.22px;top:523.40px;font-size:13.227px;color:#000000;">82,000</div>
<div class="t" style="left:1289.67px;top:523.40px;font-size:13.227px;color:#000000;">100,000</div>
<div class="t" style="left:1414.82px;top:523.40px;font-size:13.227px;color:#000000;">20,000</div>
<div class="t" style="left:1539.97px;top:523.40px;font-size:13.227px;color:#000000;">3,000</div>
<div class="t" style="left:68.92px;top:550.40px;font-size:13.227px;color:#000000;">0012</div>
<div class="t" style="left:147.00px;top:550.40px;font-size:13.227px;color:#000000;">Padmini Priyadarshini</div>
<div class="t" style="left:315.44px;top:550.40px;font-size:13.227px;color:#000000;">ACTIVE</div>
<div class="t" style="left:446.22px;top:550.40px;font-size:13.227px;color:#000000;">Yes</div>
<div class="t" style="left:564.89px;top:550.40px;font-size:13.227px;color:#000000;">Old</div>
<div class="t" style="left:818.47px;top:550.40px;font-size:13.227px;color:#000000;">150,000</div>
<div class="t" style="left:943.62px;top:550.40px;font-size:13.227px;color:#000000;">27,000</div>
<div class="t" style="left:1094.50px;top:550.40px;font-size:13.227px;color:#000000;">0</div>
<div class="t" style="left:1179.22px;top:550.40px;font-size:13.227px;color:#000000;">40,000</div>
<div class="t" style="left:1330.10px;top:550.40px;font-size:13.227px;color:#000000;">0</div>
<div class="t" style="left:1414.82px;top:550.40px;font-size:13.227px;color:#000000;">32,000</div>
<div class="t" style="left:1565.70px;top:550.40px;font-size:13.227px;color:#000000;">0</div>
<div class="t" style="left:68.92px;top:578.10px;font-size:13.227px;color:#000000;">0025</div>
<div class="t" style="left:175.62px;top:578.10px;font-size:13.227px;color:#000000;">Shivani One</div>
<div class="t" style="left:315.44px;top:578.10px;font-size:13.227px;color:#000000;">ACTIVE</div>
<div class="t" style="left:448.43px;top:578.10px;font-size:13.227px;color:#000000;">No</div>
<div class="t" style="left:564.89px;top:578.10px;font-size:13.227px;color:#000000;">Old</div>
<div class="t" style="left:858.90px;top:578.10px;font-size:13.227px;color:#000000;">0</div>
<div class="t" style="left:976.70px;top:578.10px;font-size:13.227px;color:#000000;">0</div>
<div class="t" style="left:1094.50px;top:578.10px;font-size:13.227px;color:#000000;">0</div>
<div class="t" style="left:1212.30px;top:578.10px;font-size:13.227px;color:#000000;">0</div>
<div class="t" style="left:1330.10px;top:578.10px;font-size:13.227px;color:#000000;">0</div>
<div class="t" style="left:1447.90px;top:578.10px;font-size:13.227px;color:#000000;">0</div>
<div class="t" style="left:1565.70px;top:578.10px;font-size:13.227px;color:#000000;">0</div>
</body></html>
